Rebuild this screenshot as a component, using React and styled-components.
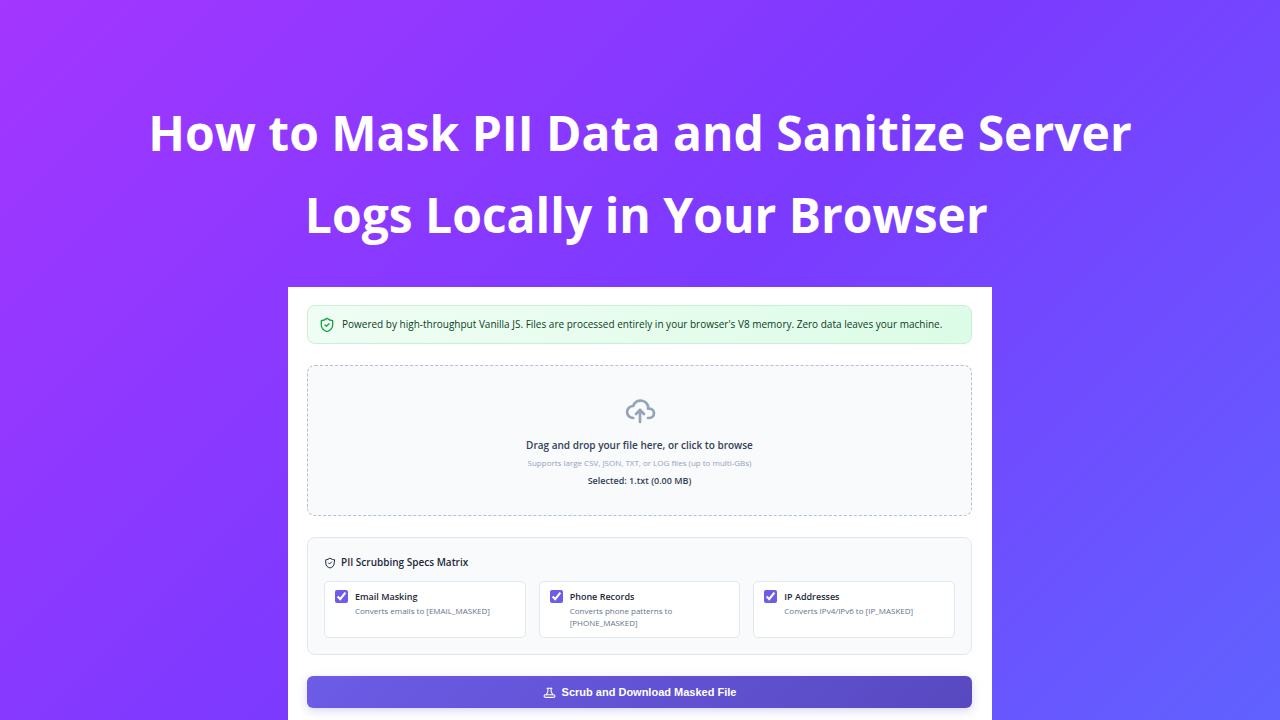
import React from 'react'
import styled, { createGlobalStyle } from 'styled-components'

const matrix = [
  { id: 'email', title: 'Email Masking', note: 'Converts emails to [EMAIL_MASKED]' },
  { id: 'phone', title: 'Phone Records', note: 'Converts phone patterns to [PHONE_MASKED]' },
  { id: 'ip', title: 'IP Addresses', note: 'Converts IPv4/IPv6 to [IP_MASKED]' },
]

const ShieldIcon = ({ size, color }) => (
  <Icon $size={size} $color={color} viewBox="0 0 24 24" strokeWidth="2" aria-hidden="true">
    <path d="M20.5 12.5c0 5.500-3.800 7.800-8.500 9.500-4.700-1.700-8.500-4-8.500-9.500V5.500c3 0 6-1.200 8.500-3.500 2.500 2.300 5.500 3.500 8.500 3.500z" />
    <path d="M9 12l2 2 4-4" />
  </Icon>
)

const CloudIcon = () => (
  <Icon $size={32} $color="#94a3b8" viewBox="0 0 24 24" strokeWidth="2" aria-hidden="true">
    <path d="M7 18a4.600 4.400 0 0 1 0-9 5 4.500 0 0 1 11 2h1a3.500 3.500 0 0 1 0 7h-1" />
    <path d="M9 15l3-3 3 3" />
    <path d="M12 12v9" />
  </Icon>
)

const FlaskIcon = () => (
  <Icon $size={13} $color="#ffffff" viewBox="0 0 24 24" strokeWidth="2" aria-hidden="true">
    <path d="M7.500 4h9" />
    <path d="M9 4v6l-3 6M15 4v6l3 6" />
    <path d="M4.500 16h15a2.500 2.500 0 0 1 0 5h-15a2.500 2.500 0 0 1 0-5z" />
  </Icon>
)

const App = () => {
  const [checked, setChecked] = React.useState({ email: true, phone: true, ip: true })

  const toggle = (id) => {
    setChecked({ ...checked, [id]: !checked[id] })
  }

  return (
    <Page>
      <GlobalStyle />
      <Title>
        How to Mask PII Data and Sanitize Server
        <br />
        &nbsp;Logs Locally in Your Browser
      </Title>
      <Card>
        <Notice>
          <ShieldIcon size={16} color="#16a34a" />
          <span>
            Powered by high-throughput Vanilla JS. Files are processed entirely in your browser's V8
            memory. Zero data leaves your machine.
          </span>
        </Notice>
        <DropZone type="button">
          <CloudIcon />
          <DropTitle>Drag and drop your file here, or click to browse</DropTitle>
          <DropHint>Supports large CSV, JSON, TXT, or LOG files (up to multi-GBs)</DropHint>
          <Selected>Selected: 1.txt (0.00 MB)</Selected>
        </DropZone>
        <Specs>
          <SpecsTitle>
            <ShieldIcon size={12} color="#1e293b" />
            PII Scrubbing Specs Matrix
          </SpecsTitle>
          <Grid>
            {matrix.map((item) => (
              <Option key={item.id} htmlFor={item.id}>
                <Check
                  id={item.id}
                  type="checkbox"
                  checked={checked[item.id]}
                  onChange={() => toggle(item.id)}
                />
                <div>
                  <OptionTitle>{item.title}</OptionTitle>
                  <OptionNote>{item.note}</OptionNote>
                </div>
              </Option>
            ))}
          </Grid>
        </Specs>
        <Submit type="button">
          <FlaskIcon />
          Scrub and Download Masked File
        </Submit>
      </Card>
    </Page>
  )
}

export default App

const GlobalStyle = createGlobalStyle`
*{
  box-sizing:border-box;
}
body{
  margin:0;
  font-family:"Segoe UI","Open Sans",sans-serif;
}
`
const Page = styled.main`
height:100vh;
overflow:hidden;
display:flex;
flex-direction:column;
align-items:center;
padding-top:92px;
background:linear-gradient(135deg,#a336ff 0%,#7c3aff 50%,#6062ff 100%);
`
const Title = styled.h1`
flex-shrink:0;
width:80%;
margin:0 0 31px;
color:white;
font-size:48px;
line-height:82px;
font-weight:700;
text-align:center;
`
const Card = styled.section`
flex-shrink:0;
width:55%;
display:flex;
flex-direction:column;
gap:21px;
padding:18px 20px 32px 19px;
background:white;
`
const Icon = styled.svg`
flex-shrink:0;
width:${(p) => p.$size}px;
height:${(p) => p.$size}px;
fill:none;
stroke:${(p) => p.$color};
stroke-linecap:round;
stroke-linejoin:round;
`
const Notice = styled.div`
display:flex;
align-items:center;
gap:7px;
padding:10px 11px;
border:1px solid #c6f1d6;
border-radius:8px;
background:linear-gradient(135deg,#f0fdf4,#dcfce7);
color:#0b3d20;
font-size:10px;
line-height:17px;
font-weight:500;
`
const DropZone = styled.button`
display:flex;
flex-direction:column;
align-items:center;
padding:28px 20px 25px;
border:1px dashed #b4c0d0;
border-radius:8px;
background:#f8fafc;
font-family:inherit;
cursor:pointer;
`
const DropTitle = styled.span`
margin-top:10px;
color:#334155;
font-size:10px;
line-height:18px;
font-weight:600;
`
const DropHint = styled.span`
color:#94a3b8;
font-size:8px;
line-height:18px;
`
const Selected = styled.span`
color:#334155;
font-size:9px;
line-height:18px;
font-weight:600;
`
const Specs = styled.div`
padding:16px;
border:1px solid #e2e8f0;
border-radius:8px;
background:#f8fafc;
`
const SpecsTitle = styled.h2`
display:flex;
align-items:center;
gap:5px;
margin:0 0 10px;
color:#1e293b;
font-size:10px;
line-height:17px;
font-weight:600;
`
const Grid = styled.div`
display:grid;
grid-template-columns:repeat(3,1fr);
gap:13px;
`
const Option = styled.label`
display:flex;
align-items:flex-start;
gap:7px;
padding:8px 10px;
border:1px solid #e2e8f0;
border-radius:5px;
background:white;
cursor:pointer;
`
const Check = styled.input`
flex-shrink:0;
width:13px;
height:13px;
margin:0;
accent-color:#6c5ce7;
`
const OptionTitle = styled.div`
color:#1e293b;
font-size:9px;
line-height:14px;
font-weight:600;
`
const OptionNote = styled.div`
margin-top:1px;
color:#64748b;
font-size:8px;
line-height:12px;
`
const Submit = styled.button`
display:flex;
align-items:center;
justify-content:center;
gap:6px;
height:32px;
border:0;
border-radius:6px;
background:linear-gradient(135deg,#6c5ce7,#5849c0);
box-shadow:0 3px 10px rgba(108,92,231,0.25);
color:white;
font-family:Arial,"Liberation Sans",sans-serif;
font-size:11px;
font-weight:700;
cursor:pointer;
`
